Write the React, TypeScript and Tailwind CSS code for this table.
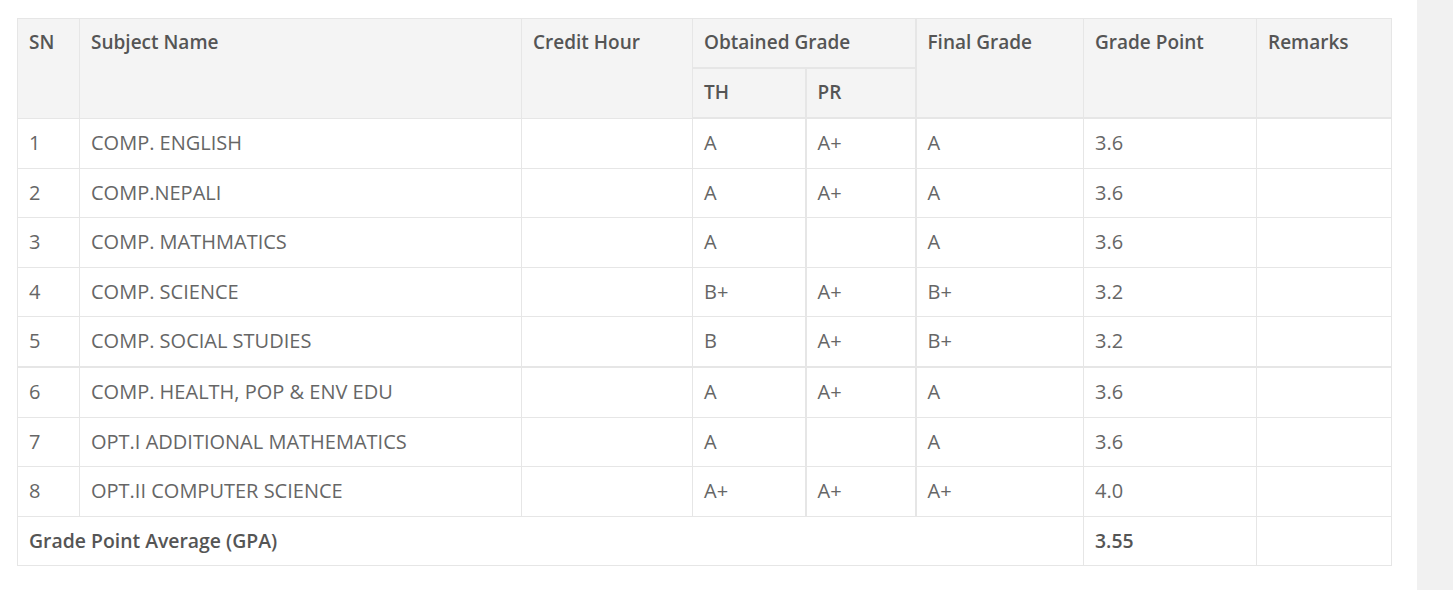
import React from 'react';

const rows = [
  { sn: 1, name: 'COMP. ENGLISH', th: 'A', pr: 'A+', final: 'A', gp: '3.6' },
  { sn: 2, name: 'COMP.NEPALI', th: 'A', pr: 'A+', final: 'A', gp: '3.6' },
  { sn: 3, name: 'COMP. MATHMATICS', th: 'A', pr: '', final: 'A', gp: '3.6' },
  { sn: 4, name: 'COMP. SCIENCE', th: 'B+', pr: 'A+', final: 'B+', gp: '3.2' },
  { sn: 5, name: 'COMP. SOCIAL STUDIES', th: 'B', pr: 'A+', final: 'B+', gp: '3.2' },
  { sn: 6, name: 'COMP. HEALTH, POP & ENV EDU', th: 'A', pr: 'A+', final: 'A', gp: '3.6' },
  { sn: 7, name: 'OPT.I ADDITIONAL MATHEMATICS', th: 'A', pr: '', final: 'A', gp: '3.6' },
  { sn: 8, name: 'OPT.II COMPUTER SCIENCE', th: 'A+', pr: 'A+', final: 'A+', gp: '4.0' }
];

export default function App() {
  const th = 'border border-[#e6e6e6] px-[11px] pt-[11px] pb-[12px] text-left align-top text-[19px] leading-[25px] font-semibold';
  const td = 'border border-[#e6e6e6] px-[11px] py-[12px] align-middle';

  return (
    <div className="flex h-[590px] w-[1453px] bg-white" style={{ fontFamily: '"Open Sans", "Liberation Sans", sans-serif' }}>
      <div className="flex-1 pl-[17px] pt-[18px]">
        <table className="w-[1374px] table-fixed border-collapse text-[20px] leading-[24.6px] text-[#666]">
          <colgroup>
            <col className="w-[62px]" />
            <col className="w-[442px]" />
            <col className="w-[171px]" />
            <col className="w-[113px]" />
            <col className="w-[110px]" />
            <col className="w-[168px]" />
            <col className="w-[173px]" />
            <col className="w-[135px]" />
          </colgroup>
          <thead className="bg-[#f4f4f4] text-[#555]">
            <tr>
              <th rowSpan={2} className={th}>SN</th>
              <th rowSpan={2} className={th}>Subject Name</th>
              <th rowSpan={2} className={th}>Credit Hour</th>
              <th colSpan={2} className={th + ' border-b-2'}>Obtained Grade</th>
              <th rowSpan={2} className={th + ' border-l-2 border-b-2'}>Final Grade</th>
              <th rowSpan={2} className={th + ' border-b-2'}>Grade Point</th>
              <th rowSpan={2} className={th + ' border-b-2'}>Remarks</th>
            </tr>
            <tr>
              <th className={th + ' border-b-2'}>TH</th>
              <th className={th + ' border-l-2 border-b-2'}>PR</th>
            </tr>
          </thead>
          <tbody>
            {rows.map(r => (
              <tr key={r.sn} className={r.sn === 6 ? 'border-t-2 border-[#e6e6e6]' : ''}>
                <td className={td}>{r.sn}</td>
                <td className={td}>{r.name}</td>
                <td className={td}></td>
                <td className={td}>{r.th}</td>
                <td className={td + ' border-l-2'}>{r.pr}</td>
                <td className={td + ' border-l-2'}>{r.final}</td>
                <td className={td}>{r.gp}</td>
                <td className={td}></td>
              </tr>
            ))}
            <tr className="font-semibold text-[#555]">
              <td colSpan={6} className={td + ' text-[19.4px]'}>Grade Point Average (GPA)</td>
              <td className={td + ' text-[19.4px]'}>3.55</td>
              <td className={td}></td>
            </tr>
          </tbody>
        </table>
      </div>
      <div className="h-full w-[36px] bg-[#f1f1f1]" />
    </div>
  );
}
